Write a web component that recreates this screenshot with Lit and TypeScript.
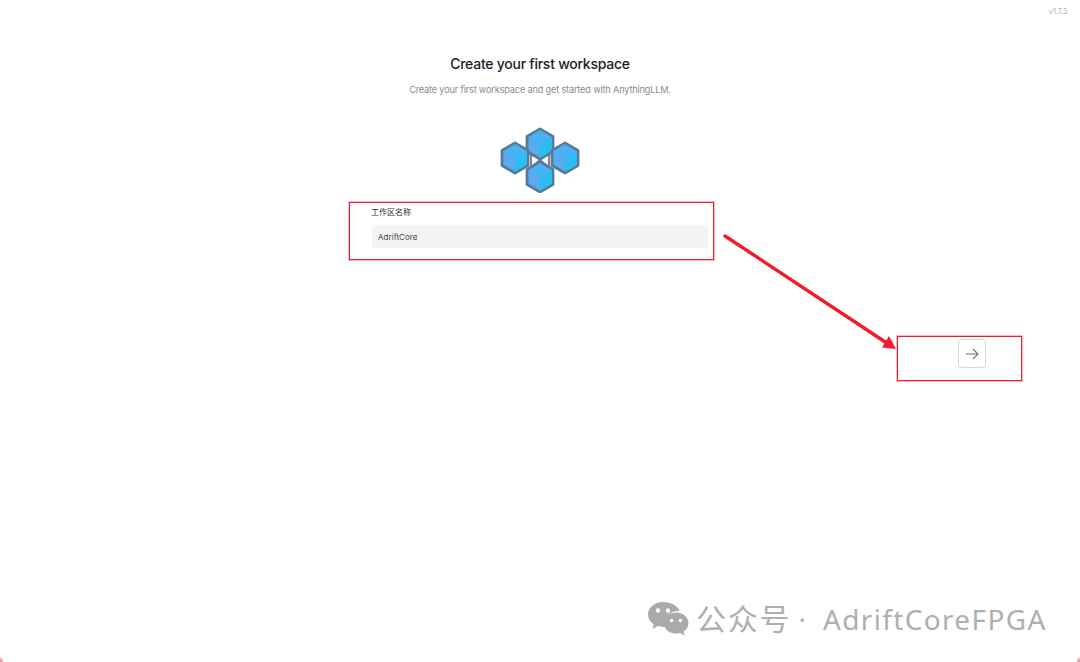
import { LitElement, html, css, svg } from 'lit'
import { customElement } from 'lit/decorators.js'

// centre of each cube in the logo, back to front
const CUBES = [
  [540, 144],
  [515, 158],
  [565, 158],
  [540, 177],
]

const cube = (cx: number, cy: number) => {
  const w = 13
  const h = 15
  const q = h / 2
  const hex = `${cx},${cy - h} ${cx + w},${cy - q} ${cx + w},${cy + q} ${cx},${cy + h} ${cx - w},${cy + q} ${cx - w},${cy - q}`
  return svg`
    <polygon points=${hex} fill="#5aaaf0" stroke="#587a98" stroke-width="2.8" stroke-linejoin="round" />
    <polygon points="${cx},${cy} ${cx + w - 1},${cy - q + 1} ${cx + w - 1},${cy + q - 1} ${cx},${cy + h - 1}" fill="#2bbdf0" />
    <polygon points="${cx},${cy} ${cx - w + 1},${cy - q + 1} ${cx},${cy - h + 1} ${cx + w - 1},${cy - q + 1}" fill="#48b2f4" />
  `
}

@customElement('app-root')
export class AppRoot extends LitElement {
  static styles = css`
    :host {
      display: block;
      position: relative;
      width: 1080px;
      height: 662px;
      overflow: hidden;
      background: #ffffff;
      font-family: Inter, 'Noto Sans CJK SC', sans-serif;
    }

    .version {
      position: absolute;
      top: 7px;
      right: 13px;
      font-size: 7px;
      color: #9aa3ad;
    }

    .page {
      display: flex;
      flex-direction: column;
      align-items: center;
      padding-top: 55px;
    }

    .title {
      margin: 0;
      font-size: 14px;
      line-height: 18px;
      font-weight: 500;
      letter-spacing: -0.25px;
      color: #1a2129;
    }

    .subtitle {
      margin: 10px 0 0;
      font-size: 9.2px;
      line-height: 14px;
      letter-spacing: -0.18px;
      color: #868c94;
    }

    .logo {
      display: block;
      margin-top: 30px;
      filter: blur(0.5px);
    }

    .form {
      display: flex;
      flex-direction: column;
      width: 336px;
      margin-top: 13px;
    }

    .label {
      font-size: 8px;
      line-height: 12px;
      color: #2b2f33;
      margin-left: -1px;
    }

    .input {
      margin-top: 7px;
      height: 23px;
      padding-left: 6px;
      display: flex;
      align-items: center;
      background: #f4f4f4;
      border-radius: 4px;
      font-size: 8.1px;
      color: #4a4a4a;
    }

    .actions {
      align-self: stretch;
      display: flex;
      justify-content: flex-end;
      padding-right: 94px;
      margin-top: 91px;
    }

    .next {
      width: 28px;
      height: 29px;
      padding: 0;
      display: flex;
      align-items: center;
      justify-content: center;
      background: #ffffff;
      border: 1px solid #d4d6d9;
      border-radius: 4px;
    }

    .box {
      position: absolute;
      box-sizing: border-box;
      border: 1px solid #ed1c2e;
      box-shadow: 0 0 0 1px rgba(237, 28, 46, 0.3);
    }

    .box.form-box {
      left: 349px;
      top: 202px;
      width: 365px;
      height: 58px;
    }

    .box.next-box {
      left: 897px;
      top: 336px;
      width: 125px;
      height: 45px;
    }

    .arrow {
      position: absolute;
      left: 715px;
      top: 228px;
      pointer-events: none;
    }

    .watermark {
      position: absolute;
      left: 647px;
      top: 600px;
      display: flex;
      align-items: center;
      gap: 7px;
      color: #afafaf;
      font-family: 'Noto Sans', 'Noto Sans CJK SC', sans-serif;
      font-size: 28px;
      line-height: 38px;
      white-space: nowrap;
    }

    .watermark .cjk {
      font-size: 30px;
      letter-spacing: 1.8px;
    }

    .watermark .dot {
      margin: 0 17px 0 7px;
    }

    .watermark .latin {
      letter-spacing: 1.35px;
    }

    .corner {
      position: absolute;
      bottom: 0;
      width: 3px;
      height: 4px;
      background: #f3a5ad;
    }

    .corner.left {
      left: 0;
      border-top-right-radius: 3px;
    }

    .corner.right {
      right: 0;
      border-top-left-radius: 3px;
    }
  `

  render() {
    return html`
      <div class="version">v1.7.3</div>

      <main class="page">
        <h1 class="title">Create your first workspace</h1>
        <p class="subtitle">Create your first workspace and get started with AnythingLLM.</p>

        <svg class="logo" width="80" height="66" viewBox="500 127 80 66">
          <polygon points="531,153 540,160 531,167" fill="#ffffff" stroke="#45525f" stroke-width="1.4" />
          <polygon points="549,153 540,160 549,167" fill="#ffffff" stroke="#45525f" stroke-width="1.4" />
          ${CUBES.map(([x, y]) => cube(x, y))}
        </svg>

        <div class="form">
          <label class="label">工作区名称</label>
          <div class="input">AdriftCore</div>
        </div>

        <div class="actions">
          <button class="next" aria-label="Next">
            <svg width="16" height="16" viewBox="0 0 16 16" fill="none" stroke="#6f7276" stroke-width="1.1">
              <path d="M2 8h12M9 3l5 5-5 5" />
            </svg>
          </button>
        </div>
      </main>

      <div class="box form-box"></div>
      <div class="box next-box"></div>

      <svg class="arrow" width="190" height="130" viewBox="715 228 190 130">
        <path d="M725 236L886 342.500" stroke="#ed1c2e" stroke-width="3.400" fill="none" stroke-linecap="round" />
        <polygon points="896,349 882,347.500 889,336" fill="#ed1c2e" />
      </svg>

      <div class="watermark">
        <svg width="42" height="36" viewBox="0 0 42 36">
          <path d="M16 1C7.500 1 1 6.600 1 13.500c0 4 2.200 7.400 5.700 9.700L5.500 28l5.300-2.900c1.700.5 3.400.8 5.200.8.600 0 1.200 0 1.800-.1-.4-1.200-.6-2.400-.6-3.700 0-6.800 6.300-12.200 14.100-12.200h1.200C30.500 4.600 23.900 1 16 1z" fill="#aaaaaa" />
          <path d="M41.500 22c0-5.800-5.700-10.500-12.500-10.500S16.500 16.200 16.500 22 22.200 32.500 29 32.500c1.500 0 2.900-.2 4.200-.6L37.500 35l-1-4.200c3-2 5-5.200 5-8.800z" fill="#aaaaaa" />
          <circle cx="11" cy="9.500" r="2.200" fill="#fff" />
          <circle cx="21" cy="9.500" r="2.200" fill="#fff" />
          <circle cx="24.500" cy="19.500" r="1.800" fill="#fff" />
          <circle cx="33.500" cy="19.500" r="1.800" fill="#fff" />
        </svg>
        <span><span class="cjk">公众号</span><span class="dot">·</span><span class="latin">AdriftCoreFPGA</span></span>
      </div>

      <div class="corner left"></div>
      <div class="corner right"></div>
    `
  }
}

declare global {
  interface HTMLElementTagNameMap {
    'app-root': AppRoot
  }
}
